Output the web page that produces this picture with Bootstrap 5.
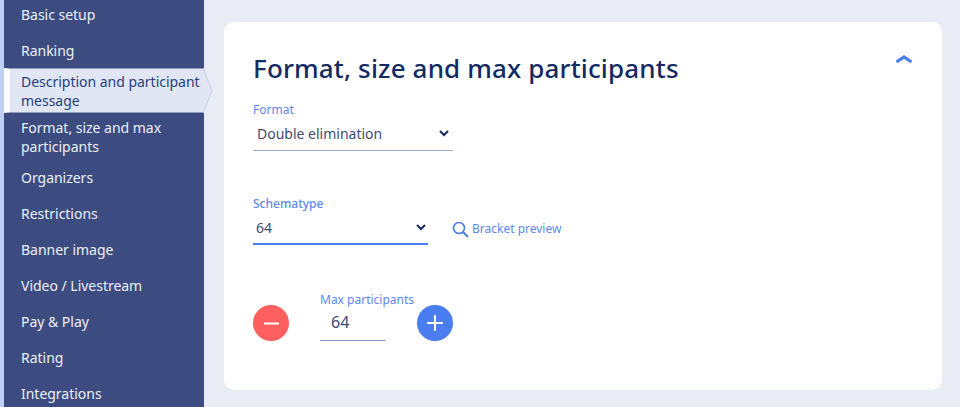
<!DOCTYPE html>
<html lang="en">
<head>
<meta charset="UTF-8">
<title>Format, size and max participants</title>
<link href="https://cdn.jsdelivr.net/npm/bootstrap@5.3.2/dist/css/bootstrap.min.css" rel="stylesheet">
<style>
html, body { height: 407px; overflow: hidden; }
body { background: #e9ecf5; font-family: "Noto Sans", sans-serif; color: #142a63; }
.page-wrap { height: 407px; }
.side-strip { width: 4px; background: #bfd0f5; flex: none; }
.side-nav { width: 199.5px; flex: none; background: #3c4c81; }
.side-list { list-style: none; margin: -4px 0 0; padding: 0; }
.side-item { height: 36px; padding-left: 17px; color: #eceff7; font-size: 14px; line-height: 19px; letter-spacing: -.02px; display: flex; align-items: center; }
.side-item.tall { height: 46px; padding-top: 1px; padding-right: 10px; }
.side-item.current { height: 45px; position: relative; background: #e0e6f4; color: #27407c; border-left: 6px solid #fff; padding-left: 11px; padding-right: 0; border-top: 1px solid #8f9cc4; border-bottom: 1px solid #8f9cc4; }
.side-arrow { position: absolute; left: 193px; top: -1px; }
.main-area { padding: 22px 18px 17px 20.5px; flex: 1 1 auto; min-width: 0; }
.form-panel { background: #fff; border-radius: 10px; height: 368px; padding: 27px 29px; position: relative; }
.panel-title { font-size: 26px; font-weight: 500; color: #142a63; line-height: 38px; letter-spacing: .15px; margin: 0; }
.toggle-up { position: absolute; right: 29px; top: 32px; }
.fld-label { font-size: 12px; line-height: 16px; color: #5f87f2; display: block; }
.fld-label.strong { font-weight: 500; }
.fld-select { display: flex; align-items: center; justify-content: space-between; padding: 0 4px; font-size: 14px; color: #3f4d73; height: 33px; border-bottom: 1px solid #9dacc9; }
.fld-format { width: 200px; padding-bottom: 2px; }
.fld-schema { width: 175px; border-bottom: 2px solid #4a7df0; padding: 0 2px 1px 3px; }
.preview-link { color: #5f87f2; font-size: 12px; text-decoration: none; display: flex; align-items: center; gap: 3px; margin-left: 24px; margin-top: 24px; }
.round-btn { width: 36px; height: 36px; border: 0; border-radius: 50%; padding: 0; display: flex; align-items: center; justify-content: center; flex: none; }
.round-minus { background: #ff5f5f; }
.round-plus { background: #4a7df0; }
.max-box { width: 65px; margin: 0 32px 0 31px; }
.max-box .fld-label { white-space: nowrap; }
.max-value { font-size: 16px; color: #3a4a75; height: 33px; line-height: 29px; padding-left: 11px; border-bottom: 1px solid #7f8fb5; }
.format-row { margin-top: 15px; }
.schema-row { margin-top: 45px; }
.max-row { margin-top: 47px; }
</style>
</head>
<body>
<div class="page-wrap d-flex">
  <div class="side-strip"></div>
  <nav class="side-nav">
    <ul class="side-list">
      <li class="side-item">Basic setup</li>
      <li class="side-item">Ranking</li>
      <li class="side-item current">
        <span>Description and participant message</span>
        <svg class="side-arrow" width="10" height="45" viewBox="0 0 10 45"><path d="M0 0 L9 22.5 L0 45" fill="#e0e6f4" stroke="#c9cfdf" stroke-width="1"/></svg>
      </li>
      <li class="side-item tall">Format, size and max participants</li>
      <li class="side-item">Organizers</li>
      <li class="side-item">Restrictions</li>
      <li class="side-item">Banner image</li>
      <li class="side-item">Video / Livestream</li>
      <li class="side-item">Pay &amp; Play</li>
      <li class="side-item">Rating</li>
      <li class="side-item">Integrations</li>
    </ul>
  </nav>
  <main class="main-area">
    <section class="form-panel">
      <h1 class="panel-title">Format, size and max participants</h1>
      <svg class="toggle-up" width="18" height="10" viewBox="0 0 18 10"><path d="M1.5 8 L9 3 L16.5 8" fill="none" stroke="#4a7df0" stroke-width="3.2"/></svg>

      <div class="format-row">
        <label class="fld-label">Format</label>
        <div class="fld-select fld-format">
          <span>Double elimination</span>
          <svg width="10" height="7" viewBox="0 0 10 7"><path d="M1 1 L5 5 L9 1" fill="none" stroke="#142a63" stroke-width="2"/></svg>
        </div>
      </div>

      <div class="schema-row d-flex align-items-start">
        <div>
          <label class="fld-label strong">Schematype</label>
          <div class="fld-select fld-schema">
            <span>64</span>
            <svg width="10" height="7" viewBox="0 0 10 7"><path d="M1 1 L5 5 L9 1" fill="none" stroke="#142a63" stroke-width="2"/></svg>
          </div>
        </div>
        <a class="preview-link" href="#">
          <svg width="17" height="17" viewBox="0 0 17 17"><circle cx="7" cy="7" r="5.5" fill="none" stroke="#4a7df0" stroke-width="1.6"/><path d="M11 11 L16 16" stroke="#4a7df0" stroke-width="2"/></svg>
          Bracket preview
        </a>
      </div>

      <div class="max-row d-flex align-items-end">
        <button class="round-btn round-minus" type="button" aria-label="Decrease">
          <svg width="15" height="3" viewBox="0 0 15 3"><path d="M0 1.5 H15" stroke="#fff" stroke-width="2"/></svg>
        </button>
        <div class="max-box">
          <label class="fld-label">Max participants</label>
          <div class="max-value">64</div>
        </div>
        <button class="round-btn round-plus" type="button" aria-label="Increase">
          <svg width="16" height="16" viewBox="0 0 16 16"><path d="M0 8 H16 M8 0 V16" stroke="#fff" stroke-width="2"/></svg>
        </button>
      </div>
    </section>
  </main>
</div>
<script src="https://cdn.jsdelivr.net/npm/bootstrap@5.3.2/dist/js/bootstrap.bundle.min.js"></script>
</body>
</html>
